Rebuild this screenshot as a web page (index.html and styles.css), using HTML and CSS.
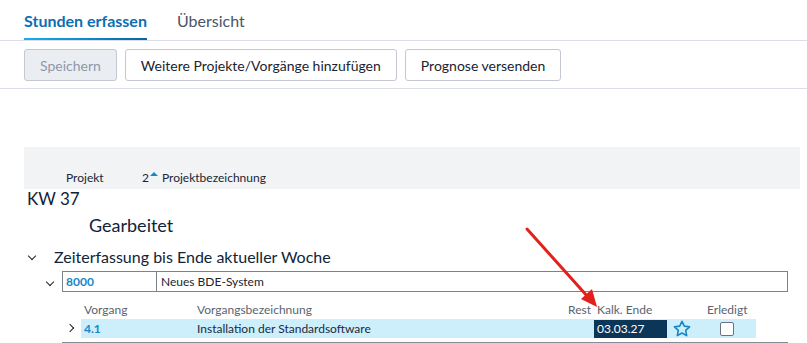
FILE: index.html
```html
<!DOCTYPE html>
<html lang="de">
<head>
    <meta charset="UTF-8">
    <title>Stunden erfassen</title>
    <link rel="stylesheet" href="styles.css">
</head>
<body>
    <div class="tabs">
        <div class="tab active">Stunden erfassen</div>
        <div class="tab">Übersicht</div>
    </div>
    <div class="toolbar">
        <button class="btn" disabled>Speichern</button>
        <button class="btn">Weitere Projekte/Vorgänge hinzufügen</button>
        <button class="btn">Prognose versenden</button>
    </div>

    <div class="content">
        <div class="grid-head">
            <span class="col-projekt">Projekt</span>
            <span class="col-bez"><span class="sort">2<span class="sort-up"></span></span>Projektbezeichnung</span>
        </div>
        <div class="kw">KW 37</div>
        <div class="gearbeitet">Gearbeitet</div>

        <div class="group-row">
            <span class="chev down"></span>
            <span>Zeiterfassung bis Ende aktueller Woche</span>
        </div>

        <div class="project-row">
            <span class="chev down small"></span>
            <div class="project-box">
                <span class="project-nr">8000</span>
                <span class="project-name">Neues BDE-System</span>
            </div>
        </div>

        <div class="task-table">
            <div class="task-head">
                <span class="c-nr">Vorgang</span>
                <span class="c-bez">Vorgangsbezeichnung</span>
                <span class="c-rest">Rest</span>
                <span class="c-ende">Kalk. Ende</span>
                <span class="c-fav"></span>
                <span class="c-done">Erledigt</span>
            </div>
            <div class="task-row">
                <span class="chev right"></span>
                <span class="c-nr link">4.1</span>
                <span class="c-bez">Installation der Standardsoftware</span>
                <span class="c-rest"></span>
                <span class="c-ende"><span class="date">03.03.27</span></span>
                <span class="c-fav">
                    <svg width="18" height="17" viewBox="0 0 24 23">
                        <path d="M12 1.8l3.1 6.5 7.1 0.9-5.2 4.9 1.3 7-6.3-3.4-6.3 3.4 1.3-7-5.2-4.9 7.1-0.9z" fill="none" stroke="#1a86c6" stroke-width="2.2" stroke-linejoin="round"/>
                    </svg>
                </span>
                <span class="c-done"><span class="checkbox"></span></span>
            </div>
        </div>
    </div>

    <svg class="arrow" width="807" height="343">
        <line x1="527" y1="229" x2="588" y2="297" stroke="#e3201b" stroke-width="3" stroke-linecap="round"/>
        <polygon points="597,307 581,299 592,289" fill="#e3201b"/>
    </svg>
</body>
</html>
```

FILE: styles.css
```css
body { margin: 0; font-family: Lato, "Open Sans", sans-serif; color: #1b2a3a; background: #fff; position: relative; }

.tabs { display: flex; gap: 30px; padding: 0 24px; height: 40px; border-bottom: 1px solid #dcdde9; }
.tab { font-size: 16px; padding-top: 11px; color: #4a5463; height: 29px; }
.tab.active { font-weight: bold; color: #0a6fb4; border-bottom: 2px solid transparent; border-image: linear-gradient(to right, #16b0e8, #0464a8) 1; height: 27px; }

.toolbar { display: flex; gap: 8px; padding: 8px 24px 7px; border-bottom: 1px solid #dcdde9; }
.btn { font-family: inherit; font-size: 14px; height: 32px; padding: 0 15px; background: #fff; border: 1px solid #c3c8d2; border-radius: 3px; color: #1b2430; }
.btn[disabled] { background: #eaedf1; color: #8e98a8; }

.content { padding: 58px 7px 0 24px; }

.grid-head { background: #f2f3f5; height: 42px; display: flex; align-items: flex-end; font-size: 12px; color: #1b2430; }
.grid-head span { padding-bottom: 4px; }
.col-projekt { padding-left: 42px; width: 76px; }
.sort { margin-right: 4px; }
.sort-up { display: inline-block; width: 0; height: 0; border-left: 4px solid transparent; border-right: 4px solid transparent; border-bottom: 4px solid #1a86c6; vertical-align: 6px; margin-left: 1px; }

.kw { font-size: 17px; padding-left: 3px; line-height: 20px; color: #0f2438; }
.gearbeitet { font-size: 18px; padding-left: 65px; margin-top: 5px; line-height: 22px; color: #0f2438; }

.chev { display: inline-block; width: 5px; height: 5px; border-right: 1.5px solid #1b2430; border-bottom: 1.5px solid #1b2430; }
.chev.down { transform: rotate(45deg); }
.chev.right { transform: rotate(-45deg); }

.group-row { display: flex; align-items: center; gap: 19px; margin-top: 9px; padding-left: 5px; font-size: 16px; color: #0f2438; height: 22px; }

.project-row { display: flex; align-items: center; gap: 9px; margin-top: 4px; padding-left: 23px; margin-right: 12px; }
.project-box { flex: 1; display: flex; height: 19px; border: 1px solid #7b8391; font-size: 12px; line-height: 19px; }
.project-nr { width: 90px; padding-left: 3px; border-right: 1px solid #7b8391; font-weight: bold; color: #1a86c6; }
.project-name { padding-left: 4px; color: #1b2430; }

.task-table { margin-left: 38px; margin-right: 12px; border-bottom: 2px solid #868b94; padding-bottom: 4px; }
.task-head, .task-row { display: flex; align-items: center; font-size: 12px; margin-left: 19px; width: 675px; }
.task-head { height: 25px; align-items: flex-end; padding-bottom: 2px; color: #5a6370; }
.task-row { height: 19px; background: #cdeefb; position: relative; }
.task-row .chev { position: absolute; left: -14px; top: 6px; }
.c-nr { width: 113px; padding-left: 3px; }
.c-bez { flex: 1; }
.c-rest { width: 22px; padding-right: 4px; text-align: right; }
.c-ende { width: 73px; }
.task-head .c-ende { width: 70px; padding-left: 3px; }
.c-fav { width: 30px; display: flex; justify-content: center; }
.c-done { width: 59px; display: flex; justify-content: center; }
.task-head .c-done { justify-content: flex-start; padding-left: 10px; width: 49px; }
.link { font-weight: bold; color: #1a86c6; }
.date { display: block; height: 18px; line-height: 18px; background: #0b3657; color: #fff; padding-left: 3px; }
.c-fav svg { display: block; }
.checkbox { display: block; width: 12px; height: 12px; border: 1px solid #6a7280; border-radius: 2px; background: #fff; }

.arrow { position: absolute; left: 0; top: 0; pointer-events: none; }
```
